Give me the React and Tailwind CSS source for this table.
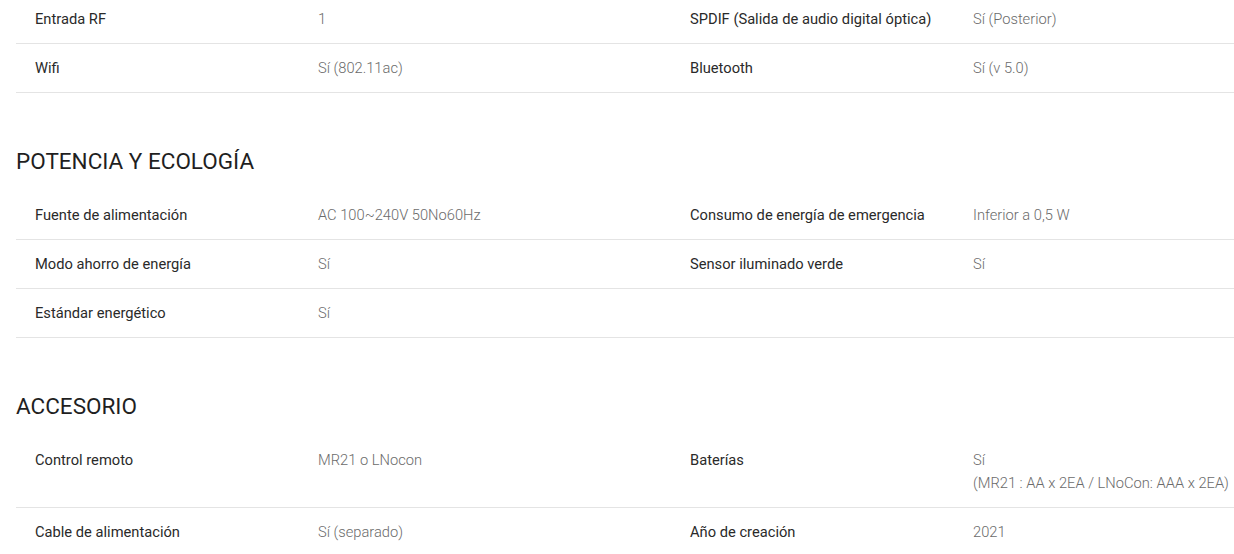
import React from 'react';

const sections = [
  {
    title: null,
    rows: [
      [
        { label: 'Entrada RF', value: ['1'] },
        { label: 'SPDIF (Salida de audio digital óptica)', value: ['Sí (Posterior)'] },
      ],
      [
        { label: 'Wifi', value: ['Sí (802.11ac)'] },
        { label: 'Bluetooth', value: ['Sí (v 5.0)'] },
      ],
    ],
  },
  {
    title: 'POTENCIA Y ECOLOGÍA',
    rows: [
      [
        { label: 'Fuente de alimentación', value: ['AC 100~240V 50No60Hz'] },
        { label: 'Consumo de energía de emergencia', value: ['Inferior a 0,5 W'] },
      ],
      [
        { label: 'Modo ahorro de energía', value: ['Sí'] },
        { label: 'Sensor iluminado verde', value: ['Sí'] },
      ],
      [{ label: 'Estándar energético', value: ['Sí'] }, null],
    ],
  },
  {
    title: 'ACCESORIO',
    rows: [
      [
        { label: 'Control remoto', value: ['MR21 o LNocon'] },
        { label: 'Baterías', value: ['Sí', '(MR21 : AA x 2EA / LNoCon: AAA x 2EA)'] },
      ],
      [
        { label: 'Cable de alimentación', value: ['Sí (separado)'] },
        { label: 'Año de creación', value: ['2021'] },
      ],
    ],
  },
];

const SpecCell = ({ item }) => {
  if (!item) return <div />;
  return (
    <div className="flex pl-[19px] pt-[13px] pb-[12px] leading-[23px]">
      <div className="w-[283px] shrink-0 text-[#2a2a2a]">{item.label}</div>
      <div className="text-[#6b6b6b] font-light whitespace-nowrap">
        {item.value.map((v, i) => (
          <div key={i}>{v}</div>
        ))}
      </div>
    </div>
  );
};

const SpecSection = ({ title, rows }) => (
  <section>
    {title && (
      <h2 className="mt-[53px] mb-[15px] text-[22.5px] leading-[30px] text-[#1f1f1f]">{title}</h2>
    )}
    <div>
      {rows.map((row, i) => (
        <div key={i} className="grid grid-cols-[655px_1fr] border-b border-[#e4e4e4]">
          <SpecCell item={row[0]} />
          <SpecCell item={row[1]} />
        </div>
      ))}
    </div>
  </section>
);

export default function App() {
  return (
    <div
      className="w-[1234px] h-[554px] overflow-hidden bg-white text-[14.7px]"
      style={{ fontFamily: 'Roboto, "Liberation Sans", sans-serif' }}
    >
      <div className="-mt-[5px] pl-4 w-[1320px]">
        {sections.map((s, i) => (
          <SpecSection key={i} title={s.title} rows={s.rows} />
        ))}
      </div>
    </div>
  );
}
